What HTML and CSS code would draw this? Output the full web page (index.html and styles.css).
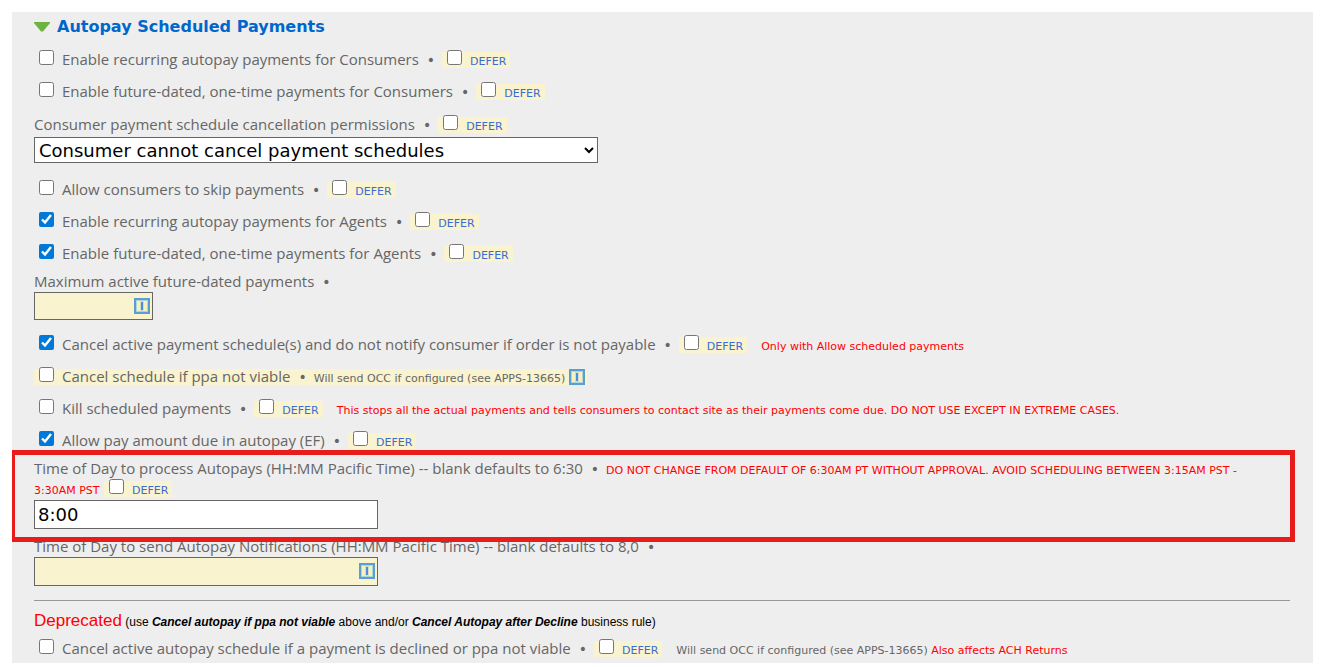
FILE: index.html
```html
<!DOCTYPE html>
<html lang="en">
<head>
<meta charset="utf-8">
<title>Autopay Scheduled Payments</title>
<link rel="stylesheet" href="styles.css">
</head>
<body>
<svg class="sprite" aria-hidden="true">
  <symbol id="inherit" viewBox="0 0 16 16">
    <rect x="1" y="1" width="14" height="14" fill="#f8f0bd" stroke="#589fd6" stroke-width="2"/>
    <rect x="2.5" y="2.5" width="11" height="11" fill="none" stroke="#b5d3d0"/>
    <rect x="6" y="3" width="4" height="10" fill="#cfdfca"/>
    <rect x="7" y="4" width="2" height="8" fill="#4c8edb"/>
  </symbol>
</svg>
<main class="panel">
  <h2 class="heading"><svg class="arrow" viewBox="0 0 16 10" aria-hidden="true"><path d="M0 0H16V1L9 9.500H7L0 1Z" fill="#6db33f"/></svg>Autopay Scheduled Payments</h2>

  <div class="row"><input class="check" type="checkbox" id="c1"><label class="name" for="c1">Enable recurring autopay payments for Consumers</label><span class="dot">•</span><span class="defer"><input type="checkbox" id="d1"><label for="d1">DEFER</label></span></div>
  <div class="row"><input class="check" type="checkbox" id="c2"><label class="name" for="c2">Enable future-dated, one-time payments for Consumers</label><span class="dot">•</span><span class="defer"><input type="checkbox" id="d2"><label for="d2">DEFER</label></span></div>

  <div class="field field-select">
    <div class="caption"><label class="name" for="perm">Consumer payment schedule cancellation permissions</label><span class="dot">•</span><span class="defer"><input type="checkbox" id="d3"><label for="d3">DEFER</label></span></div>
    <select id="perm" class="select"><option>Consumer cannot cancel payment schedules</option></select>
  </div>

  <div class="row"><input class="check" type="checkbox" id="c4"><label class="name" for="c4">Allow consumers to skip payments</label><span class="dot">•</span><span class="defer"><input type="checkbox" id="d4"><label for="d4">DEFER</label></span></div>
  <div class="row"><input class="check" type="checkbox" id="c5" checked><label class="name" for="c5">Enable recurring autopay payments for Agents</label><span class="dot">•</span><span class="defer"><input type="checkbox" id="d5"><label for="d5">DEFER</label></span></div>
  <div class="row"><input class="check" type="checkbox" id="c6" checked><label class="name" for="c6">Enable future-dated, one-time payments for Agents</label><span class="dot">•</span><span class="defer"><input type="checkbox" id="d6"><label for="d6">DEFER</label></span></div>

  <div class="field">
    <div class="caption"><label class="name" for="max">Maximum active future-dated payments</label><span class="dot">•</span></div>
    <div class="box box-short"><input class="text inherited" type="text" id="max"><svg class="icon"><use href="#inherit"/></svg></div>
  </div>

  <div class="row"><input class="check" type="checkbox" id="c7" checked><label class="name" for="c7">Cancel active payment schedule(s) and do not notify consumer if order is not payable</label><span class="dot">•</span><span class="defer"><input type="checkbox" id="d7"><label for="d7">DEFER</label></span><span class="note warn after">Only with Allow scheduled payments</span></div>
  <div class="row"><span class="marked"><input class="check" type="checkbox" id="c8"><label class="name" for="c8">Cancel schedule if ppa not viable</label><span class="dot">•</span><span class="note">Will send OCC if configured (see APPS-13665)</span><svg class="icon"><use href="#inherit"/></svg></span></div>
  <div class="row"><input class="check" type="checkbox" id="c9"><label class="name" for="c9">Kill scheduled payments</label><span class="dot">•</span><span class="defer"><input type="checkbox" id="d9"><label for="d9">DEFER</label></span><span class="note warn after">This stops all the actual payments and tells consumers to contact site as their payments come due. DO NOT USE EXCEPT IN EXTREME CASES.</span></div>
  <div class="row"><input class="check" type="checkbox" id="c10" checked><label class="name" for="c10">Allow pay amount due in autopay (EF)</label><span class="dot">•</span><span class="defer"><input type="checkbox" id="d10"><label for="d10">DEFER</label></span></div>

  <div class="field field-highlight">
    <div class="caption"><label class="name" for="process">Time of Day to process Autopays (HH:MM Pacific Time) -- blank defaults to 6:30</label><span class="dot">•</span><span class="note warn">DO NOT CHANGE FROM DEFAULT OF 6:30AM PT WITHOUT APPROVAL. AVOID SCHEDULING BETWEEN 3:15AM PST - 3:30AM PST</span> <span class="defer"><input type="checkbox" id="d11"><label for="d11">DEFER</label></span></div>
    <div class="box"><input class="text" type="text" id="process" value="8:00"></div>
  </div>

  <div class="field">
    <div class="caption"><label class="name" for="notify">Time of Day to send Autopay Notifications (HH:MM Pacific Time) -- blank defaults to 8,0</label><span class="dot">•</span></div>
    <div class="box"><input class="text inherited" type="text" id="notify"><svg class="icon"><use href="#inherit"/></svg></div>
  </div>

  <hr class="rule">
  <p class="deprecated"><span class="deprecated-title">Deprecated</span> (use <b><i>Cancel autopay if ppa not viable</i></b> above and/or <b><i>Cancel Autopay after Decline</i></b> business rule)</p>
  <div class="row row-last"><input class="check" type="checkbox" id="c12"><label class="name" for="c12">Cancel active autopay schedule if a payment is declined or ppa not viable</label><span class="dot">•</span><span class="defer"><input type="checkbox" id="d12"><label for="d12">DEFER</label></span><span class="note after">Will send OCC if configured (see APPS-13665) <span class="warn">Also affects ACH Returns</span></span></div>
</main>
</body>
</html>
```
FILE: styles.css
```css
body {
  margin: 12px 12px 4px;
  background: #fff;
  color: #666;
  font: 14px/20px Verdana, "DejaVu Sans", sans-serif;
}
.sprite { position: absolute; width: 0; height: 0; }
.panel {
  padding: 0 23px 0 22px;
  background: #eee;
}
.heading {
  margin: 0;
  padding: 1px 0 3px;
  color: #06c;
  font-size: 16px;
  line-height: 28px;
}
.arrow { width: 16px; height: 10px; margin-right: 7px; }

.row { padding: 6px 0; }
.row-last { padding-bottom: 4px; }
.name { font: 15px/16px "Open Sans", sans-serif; }
input[type="checkbox"] {
  width: 15px;
  height: 15px;
  margin: 0;
  vertical-align: baseline;
  accent-color: #0078d7;
}
input.check { margin: 0 8px 0 5px; }
.dot { margin: 0 7px 0 8px; }
.defer, .marked { background: #f9f3d0; }
.defer { padding: 0 4px 0 5px; white-space: nowrap; }
.defer input[type="checkbox"] { margin-right: 8px; }
.defer label {
  color: #3a6bd6;
  font-size: 11px;
  line-height: 11px;
}
.note { font-size: 11px; line-height: 11px; }
.warn { color: #f00; }
.after { margin-left: 14px; }
.icon { width: 16px; height: 16px; }
.marked { padding-right: 2px; }
.marked .icon { margin-left: 4px; vertical-align: -3px; }

.field { margin: 3px 0 9px; }
.field-select { margin: 7px 0 11px; }
.caption { padding-right: 16px; line-height: 19px; }
.select {
  display: block;
  width: 564px;
  max-width: 100%;
  height: 26px;
  margin-top: 2px;
  padding: 0 2px 0 0;
  border: 1px solid #666;
  border-radius: 0;
  background: #fff;
  color: #000;
  font: 18px Verdana, "DejaVu Sans", sans-serif;
}
.box { position: relative; width: 344px; }
.box-short { width: 119px; }
.text {
  display: block;
  box-sizing: border-box;
  width: 100%;
  height: 29px;
  padding: 0 3px;
  border: 1px solid #666;
  background: #fff;
  color: #000;
  font: 18px Verdana, "DejaVu Sans", sans-serif;
}
.box-short .text { height: 28px; }
.inherited { background: #f9f3d0; }
.box .icon { position: absolute; top: 6px; right: 3px; }

.field-highlight { position: relative; }
.field-highlight .box { margin-top: 1px; }
.field-highlight::after {
  content: "";
  position: absolute;
  inset: -10px -5px -13px -24px;
  border: 5px solid #e91c1c;
  pointer-events: none;
}
.rule {
  height: 1px;
  margin: 14px 0 10px;
  border: 0;
  background: #999;
}
.deprecated {
  margin: 0 0 1px;
  color: #000;
  font: 12px/20px Arial, "Liberation Sans", sans-serif;
}
.deprecated-title { color: #f00; font-size: 17px; }
```
